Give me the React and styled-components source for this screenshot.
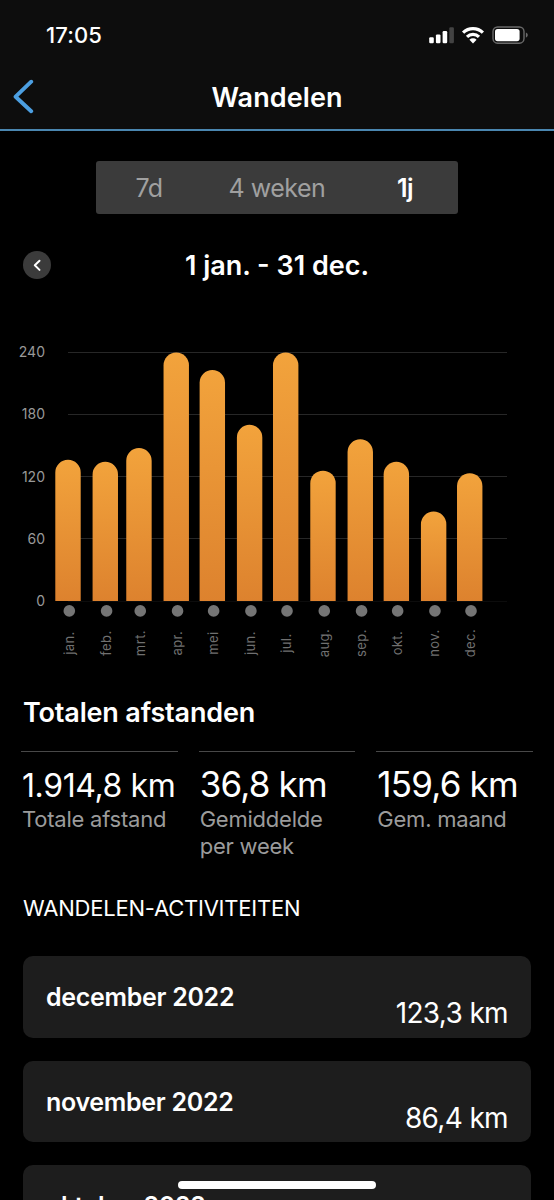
import React, { Component } from "react";
import styled, { createGlobalStyle, css } from "styled-components";

const DAY_OFFSETS = [0, 31, 59, 90, 120, 151, 181, 212, 243, 273, 304, 334];

const months = [
  { label: "jan.", km: 136.4 },
  { label: "feb.", km: 134.5 },
  { label: "mrt.", km: 147.8 },
  { label: "apr.", km: 240 },
  { label: "mei", km: 223 },
  { label: "jun.", km: 170.2 },
  { label: "jul.", km: 240 },
  { label: "aug.", km: 125.9 },
  { label: "sep.", km: 156.2 },
  { label: "okt.", km: 134.5 },
  { label: "nov.", km: 86.4 },
  { label: "dec.", km: 123.3 },
];

const totals = [
  { value: "1.914,8 km", label: "Totale afstand", small: true },
  { value: "36,8 km", label: "Gemiddelde per week" },
  { value: "159,6 km", label: "Gem. maand" },
];

const activities = [
  { month: "december 2022", distance: "123,3 km" },
  { month: "november 2022", distance: "86,4 km" },
  { month: "oktober 2022", distance: "134,5 km" },
];

class StatusIcons extends Component {
  render() {
    return (
      <svg width="100" height="20" viewBox="428 25 100 20">
        <g fill="#fff">
          <rect x="429.2" y="37.3" width="4.6" height="6" rx="1.2" />
          <rect x="435.9" y="34.4" width="4.6" height="8.9" rx="1.2" />
          <rect x="442.6" y="31" width="4.6" height="12.3" rx="1.2" />
          <rect x="449.3" y="27.2" width="4.6" height="16.1" rx="1.2" fill="#434343" />
        </g>
        <g fill="none" stroke="#fff" strokeWidth="3.2">
          <path d="M463.1 32.6 A14.2 14.2 0 0 1 482.9 32.6" />
          <path d="M467 36.9 A8.6 8.6 0 0 1 479 36.9" />
        </g>
        <path d="M473 43.4 L469.4 39.8 A5.2 5.2 0 0 1 476.6 39.8 Z" fill="#fff" />
        <rect x="493" y="27" width="31" height="16.2" rx="4.6" fill="none" stroke="#6a6a6a" strokeWidth="1.4" />
        <rect x="495" y="29" width="24.6" height="12.2" rx="2.6" fill="#fff" />
        <path d="M525.9 32.4 Q527.8 33.3 527.8 35.1 Q527.8 36.9 525.9 37.8 Z" fill="#6a6a6a" />
      </svg>
    );
  }
}

class Chart extends Component {
  render() {
    const left = 68;
    const right = 507;
    const bottom = 271;
    const scale = 248.5 / 240;
    const perDay = (right - left) / 365;

    return (
      <ChartSvg width="554" height="340" viewBox="0 0 554 340">
        <defs>
          <linearGradient id="bar" x1="0" y1="0" x2="0" y2="1">
            <stop offset="0" stopColor="#f2a33c" />
            <stop offset="1" stopColor="#dd822e" />
          </linearGradient>
        </defs>
        {[240, 180, 120, 60, 0].map((tick) => {
          const y = bottom - tick * scale;
          return (
            <g key={tick}>
              <rect x={left} y={Math.floor(y)} width={right - left} height="1" fill={tick ? "#272727" : "#0c0c0c"} />
              <Tick x="45" y={y + 4.8}>{tick}</Tick>
            </g>
          );
        })}
        {months.map(({ label, km }, i) => {
          const x = left + DAY_OFFSETS[i] * perDay;
          const top = bottom - km * scale;
          return (
            <g key={label}>
              <path
                d={`M${x - 12.7} ${bottom} V${top + 12.7} a12.7 12.7 0 0 1 25.4 0 V${bottom} Z`}
                fill="url(#bar)"
              />
              <circle cx={x + 1.3} cy="280.9" r="5.8" fill="#757575" />
              <Month transform={`translate(${x + 5.7} 313.1) rotate(-90)`}>{label}</Month>
            </g>
          );
        })}
      </ChartSvg>
    );
  }
}

export default class App extends Component {
  render() {
    return (
      <Screen>
        <GlobalStyle />
        <Header>
          <StatusBar>
            <Clock>17:05</Clock>
            <StatusIcons />
          </StatusBar>
          <NavBar>
            <BackButton aria-label="Terug">
              <svg width="24" height="36" viewBox="11 79 24 36">
                <path d="M31.2 81.7 L15.6 96.7 L31.2 111.2" fill="none" stroke="#4c9fe1" strokeWidth="3.9" strokeLinecap="round" strokeLinejoin="round" />
              </svg>
            </BackButton>
            <Title>Wandelen</Title>
          </NavBar>
        </Header>
        <Segments>
          <Segment>7d</Segment>
          <Segment>4 weken</Segment>
          <Segment $active>1j</Segment>
        </Segments>
        <PeriodRow>
          <PreviousButton aria-label="Vorige periode">
            <svg width="28" height="28" viewBox="0 0 28 28">
              <path d="M16.5 9.8 L11.8 14.3 L16.5 18.9" fill="none" stroke="#fff" strokeWidth="2" strokeLinecap="round" strokeLinejoin="round" />
            </svg>
          </PreviousButton>
          <Period>1 jan. - 31 dec.</Period>
        </PeriodRow>
        <Chart />
        <SectionTitle>Totalen afstanden</SectionTitle>
        <Totals>
          {totals.map(({ value, label, small }) => (
            <Total key={label}>
              <TotalValue $small={small}>{value}</TotalValue>
              <TotalLabel>{label}</TotalLabel>
            </Total>
          ))}
        </Totals>
        <ListTitle>WANDELEN-ACTIVITEITEN</ListTitle>
        <ActivityList>
          {activities.map(({ month, distance }) => (
            <Activity key={month}>
              <ActivityMonth>{month}</ActivityMonth>
              <ActivityDistance>{distance}</ActivityDistance>
            </Activity>
          ))}
        </ActivityList>
        <HomeIndicator />
      </Screen>
    );
  }
}

const GlobalStyle = createGlobalStyle`
  * {
    box-sizing: border-box;
  }
  body {
    margin: 0;
    background: #000;
  }
  button {
    border: 0;
    padding: 0;
    background: none;
    font: inherit;
    color: inherit;
  }
`;

const Screen = styled.div`
  position: relative;
  width: 554px;
  height: 1200px;
  overflow: hidden;
  display: flex;
  flex-direction: column;
  background: #000;
  color: #fff;
  font-family: Inter, "Liberation Sans", sans-serif;
  white-space: nowrap;
  > * {
    flex-shrink: 0;
  }
`;

const Header = styled.header`
  height: 131px;
  background: #0d0d0d;
  border-bottom: 2px solid #4a86b0;
`;

const StatusBar = styled.div`
  height: 66px;
  padding: 25px 26px 0 46px;
  display: flex;
  justify-content: space-between;
  align-items: flex-start;
`;

const Clock = styled.span`
  font-size: 22px;
  line-height: 20px;
  font-weight: 550;
  letter-spacing: 0.1px;
`;

const NavBar = styled.div`
  height: 62px;
  padding: 0 11px;
  display: grid;
  grid-template-columns: 40px 1fr 40px;
  align-items: center;
`;

const BackButton = styled.button`
  display: flex;
`;

const Title = styled.h1`
  margin: 2px 0 0;
  text-align: center;
  font-size: 27px;
  line-height: 32px;
  font-weight: 600;
  letter-spacing: 0.1px;
`;

const Segments = styled.div`
  width: 362px;
  height: 53px;
  margin: 30px 0 0 96px;
  display: grid;
  grid-template-columns: 106px 150px 106px;
  border-radius: 3px;
  background: #3b3b3b;
`;

const Segment = styled.button`
  && {
    height: 53px;
    color: #a0a0a0;
    font-size: 25px;
    line-height: 54px;
    letter-spacing: -0.5px;
    ${(props) =>
      props.$active &&
      css`
        color: #fff;
        font-weight: 600;
      `}
  }
`;

const PeriodRow = styled.div`
  height: 28px;
  margin: 37px 23px 0;
  display: grid;
  grid-template-columns: 28px 1fr 28px;
  grid-template-rows: 28px;
  align-items: start;
`;

const PreviousButton = styled.button`
  && {
    display: flex;
    border-radius: 50%;
    background: #3b3b3b;
  }
`;

const Period = styled.h2`
  margin: 0;
  text-align: center;
  font-size: 27px;
  line-height: 30px;
  font-weight: 600;
`;

const ChartSvg = styled.svg`
  display: block;
  margin-top: 51px;
`;

const Tick = styled.text`
  fill: #999;
  font-size: 14px;
  text-anchor: end;
`;

const Month = styled.text`
  fill: #707070;
  font-size: 13px;
  letter-spacing: 0.4px;
  text-anchor: middle;
`;

const SectionTitle = styled.h2`
  margin: 27px 0 0 23px;
  font-size: 27px;
  line-height: 32px;
  font-weight: 600;
  letter-spacing: -0.17px;
`;

const Totals = styled.div`
  margin: 22px 21px 0;
  height: 111px;
  display: grid;
  grid-template-columns: repeat(3, minmax(0, 1fr));
  gap: 21px;
`;

const Total = styled.div`
  border-top: 1px solid #484848;
  padding: 14px 0 0 1px;
`;

const TotalValue = styled.div`
  height: 40px;
  font-size: ${(props) => (props.$small ? "32px" : "35px")};
  line-height: ${(props) => (props.$small ? "40px" : "36px")};
  letter-spacing: ${(props) => (props.$small ? "-0.4px" : "-0.8px")};
`;

const TotalLabel = styled.div`
  color: #9b9b9b;
  font-size: 22px;
  line-height: 27px;
  letter-spacing: -0.23px;
  white-space: normal;
`;

const ListTitle = styled.h3`
  margin: 32px 0 0 23px;
  font-size: 22px;
  line-height: 28px;
  font-weight: 400;
  letter-spacing: -0.22px;
`;

const ActivityList = styled.div`
  margin: 34px 23px 0;
  display: flex;
  flex-direction: column;
  gap: 23px;
`;

const Activity = styled.div`
  height: 81.7px;
  flex-shrink: 0;
  padding: 25px 23px 0;
  display: flex;
  justify-content: space-between;
  border-radius: 10px;
  background: #1d1d1d;
`;

const ActivityMonth = styled.span`
  font-size: 25px;
  line-height: 32px;
  font-weight: 600;
  letter-spacing: -0.3px;
`;

const ActivityDistance = styled.span`
  margin-top: 15px;
  font-size: 28px;
  line-height: 34px;
  letter-spacing: -0.65px;
`;

const HomeIndicator = styled.div`
  position: absolute;
  left: 178px;
  bottom: 11px;
  width: 198px;
  height: 8px;
  border-radius: 4px;
  background: #fff;
`;
